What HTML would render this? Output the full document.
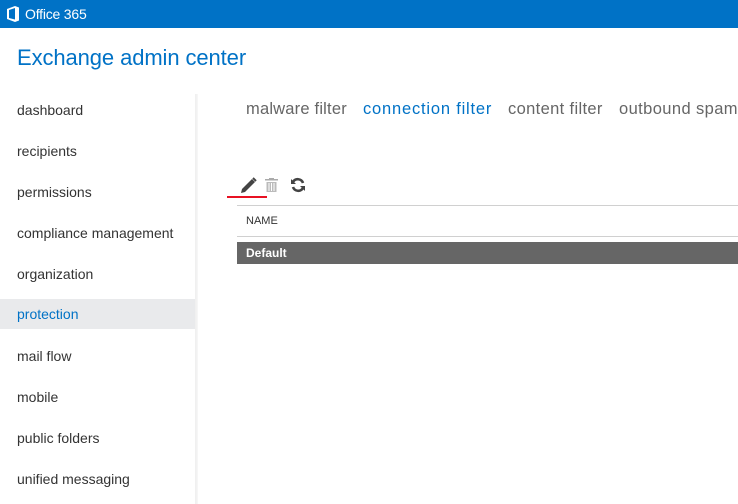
<!DOCTYPE html>
<html><head><style>
body{margin:0;width:738px;height:504px;overflow:hidden;background:#fff;font-family:"Liberation Sans",sans-serif;position:relative}
.top{position:absolute;left:0;top:0;width:738px;height:28px;background:#0072c6;color:#fff}
.top span{position:absolute;left:25px;top:6px;font-size:14px;letter-spacing:-0.2px}
h1{position:absolute;left:17px;top:45px;margin:0;font-weight:normal;font-size:22px;color:#0072c6;letter-spacing:-0.1px}
.nav div{position:absolute;left:0;width:196px;height:30px;line-height:30px;padding-left:17px;box-sizing:border-box;font-size:14px;color:#333}
.nav .sel{background:#e9eaec;color:#0072c6}
.div{position:absolute;left:195px;top:94px;width:3px;height:410px;background:linear-gradient(to right,#eee,#f7f7f7)}
.tabs span{position:absolute;top:100px;font-size:16.5px;color:#666;white-space:nowrap}
.row{position:absolute;left:237px;width:501px}
</style></head><body>
<div class="top">
<svg style="position:absolute;left:6px;top:6px" width="14" height="16" viewBox="0 0 14 16"><path d="M1 3L9 0L13 1.5V14.5L9 16L1 13ZM3 4V12L9 13.5V2Z" fill="#fff"/></svg>
<span>Office 365</span></div>
<h1>Exchange admin center</h1>
<div class="nav">
<div style="top:95px">dashboard</div>
<div style="top:136px">recipients</div>
<div style="top:177px">permissions</div>
<div style="top:218px">compliance management</div>
<div style="top:259px">organization</div>
<div class="sel" style="top:299px">protection</div>
<div style="top:341px">mail flow</div>
<div style="top:382px">mobile</div>
<div style="top:423px">public folders</div>
<div style="top:464px">unified messaging</div>
</div>
<div class="div"></div>
<div class="tabs">
<span style="left:246px;letter-spacing:0.2px">malware filter</span>
<span style="left:363px;color:#0072c6;letter-spacing:0.8px">connection filter</span>
<span style="left:508px;letter-spacing:0.35px">content filter</span>
<span style="left:619px;letter-spacing:0.4px">outbound spam</span>
</div>
<svg style="position:absolute;left:240px;top:177px" width="17" height="17" viewBox="0 0 17 17"><path d="M1 16L2 12L12 2L15 5L5 15Z" fill="#444"/><path d="M13 1L16 4" stroke="#444" stroke-width="2"/></svg>
<svg style="position:absolute;left:265px;top:178px" width="13" height="14" viewBox="0 0 13 14"><rect x="0" y="1" width="13" height="1.5" fill="#aaa"/><rect x="4" y="0" width="5" height="1.5" fill="#aaa"/><rect x="1.5" y="4" width="10" height="10" fill="#bbb"/><path d="M4 5V13M6.5 5V13M9 5V13" stroke="#fff" stroke-width="1"/></svg>
<svg style="position:absolute;left:290px;top:177px" width="16" height="16" viewBox="0 0 16 16"><path d="M13 6A5.5 5.5 0 0 0 3 5" stroke="#444" stroke-width="2.6" fill="none"/><path d="M1 2V7H6Z" fill="#444"/><path d="M3 10A5.5 5.5 0 0 0 13 11" stroke="#444" stroke-width="2.6" fill="none"/><path d="M15 14V9H10Z" fill="#444"/></svg>
<div style="position:absolute;left:227px;top:196px;width:40px;height:2px;background:#e81123"></div>
<div class="row" style="top:205px;height:1px;background:#d0d0d0"></div>
<div class="row" style="top:215px;font-size:11px;color:#333;left:246px">NAME</div>
<div class="row" style="top:236px;height:1px;background:#d0d0d0"></div>
<div class="row" style="top:242px;height:22px;background:#666;color:#fff;font-weight:bold;font-size:12px;line-height:23px;padding-left:9px;box-sizing:border-box">Default</div>
</body></html>
